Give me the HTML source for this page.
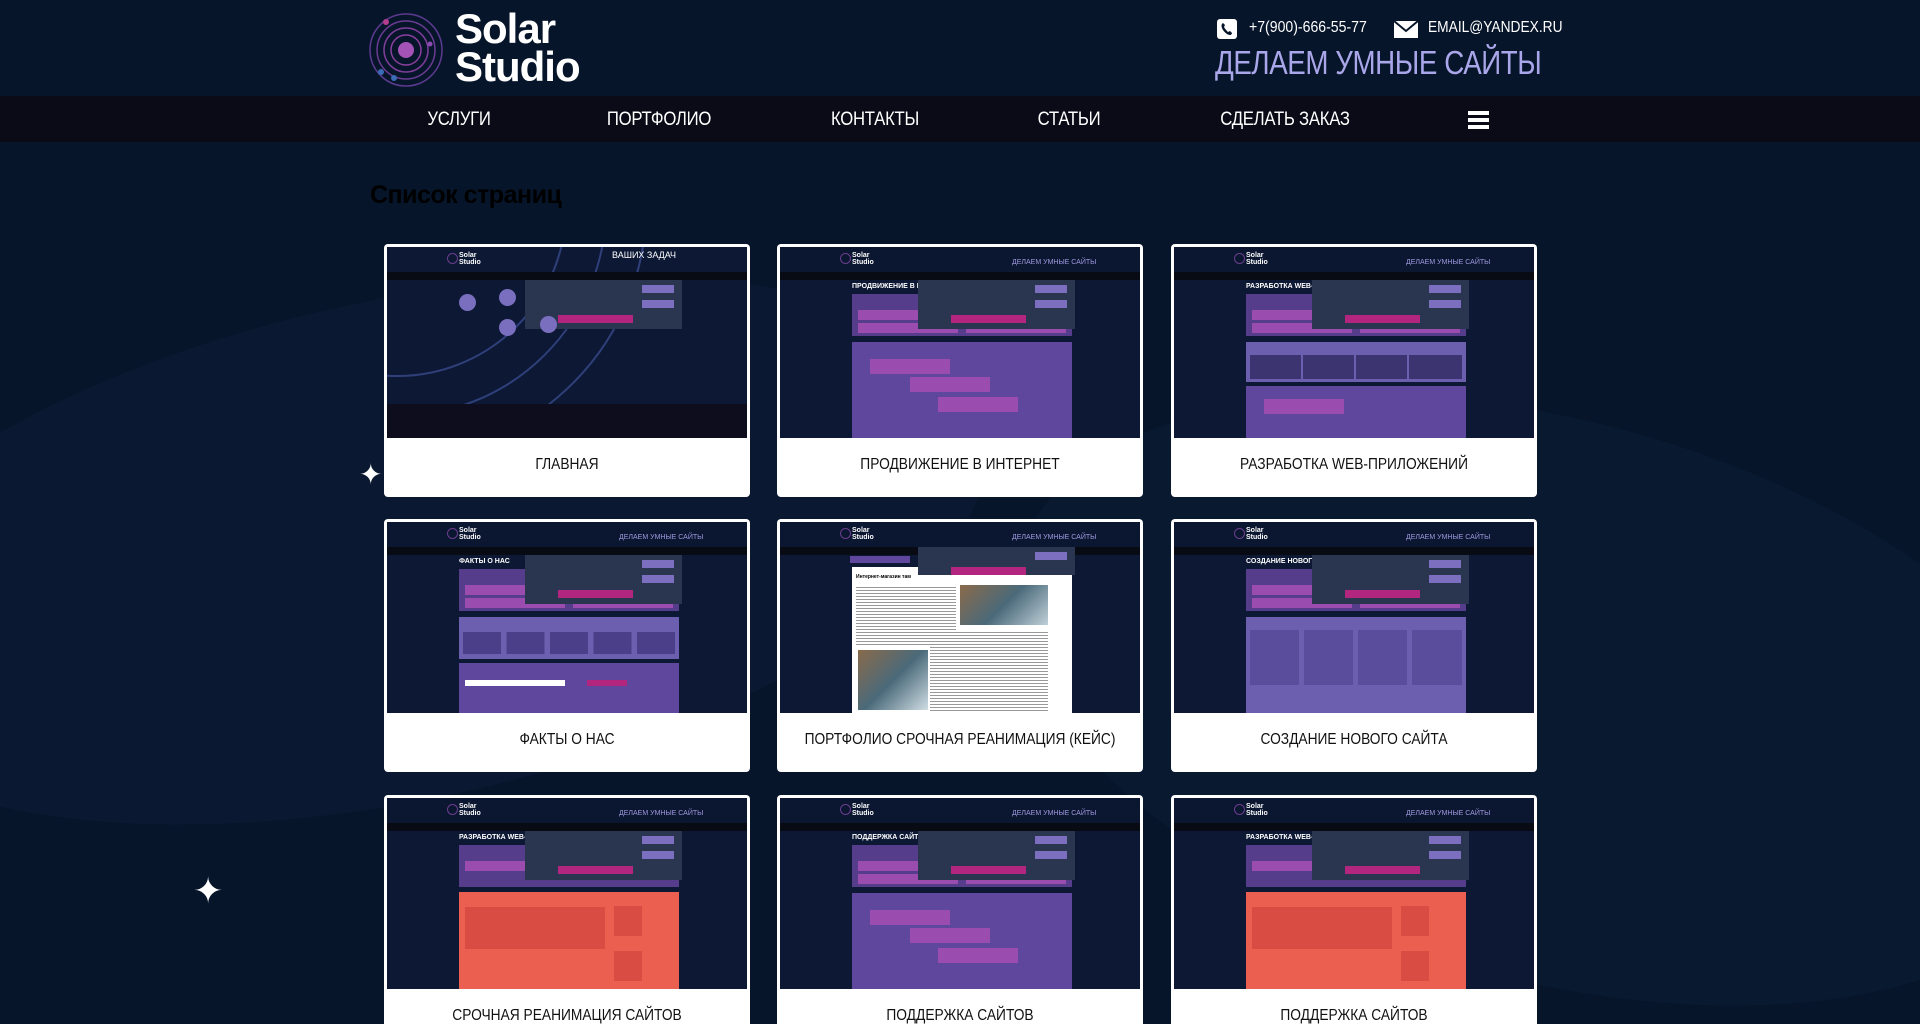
<!DOCTYPE html>
<html><head><meta charset="utf-8">
<style>
*{margin:0;padding:0;box-sizing:border-box}
html,body{width:1920px;height:1024px;overflow:hidden}
body{background:#07152a;font-family:"Liberation Sans","DejaVu Sans",sans-serif}
#w{position:relative;width:1920px;height:1024px;overflow:hidden;background:#07152a}
.bg1{position:absolute;left:-200px;top:300px;width:1200px;height:500px;border-radius:50%;background:#0b1a33;transform:rotate(-12deg);opacity:.8}
.bg2{position:absolute;left:1000px;top:420px;width:1100px;height:560px;border-radius:50%;background:#0a1a32;transform:rotate(15deg);opacity:.8}
.header{position:absolute;left:0;top:0;width:1920px;height:96px}
.nav{position:absolute;left:0;top:96px;width:1920px;height:46px;background:#0a0b17}
.nav span{position:absolute;top:13px;color:#fff;font-size:19px;transform:translateX(-50%) scaleX(.88);letter-spacing:-.3px;white-space:nowrap}
.star{position:absolute;color:#fff}
h1{position:absolute;left:370px;top:181px;font-size:25px;color:#000;font-weight:bold;letter-spacing:-.5px}
.card{position:absolute;width:366px;height:253px;background:#fff;border-radius:4px;overflow:hidden}
.thumb{position:absolute;left:3px;top:3px;width:360px;height:191px;background:#0c1834;overflow:hidden}
.label{position:absolute;left:0;top:212px;width:100%;text-align:center;font-size:16px;color:#111;transform:scaleX(.86)}
.mh{position:absolute;left:0;top:0;width:360px;height:25px;background:#0b1630}
.mn{position:absolute;left:0;top:25px;width:360px;height:8px;background:#080a14}
.ml{position:absolute;left:72px;top:5px;color:#fff;font-size:7px;line-height:7px;font-weight:bold}
.mlc{position:absolute;left:60px;top:6px;width:11px;height:11px;border-radius:50%;border:1px solid #6b3d8f}
.mt{position:absolute;left:232px;top:12px;color:#9f9ae0;font-size:7px}
.pan{position:absolute;left:138px;top:33px;width:157px;height:49px;background:#2a3550}
.pan i{position:absolute;background:#7d6fc0;width:32px;height:8px}
.pan b{position:absolute;left:33px;top:35px;width:75px;height:8px;background:#b3267f}
.pt{position:absolute;left:72px;top:36px;color:#fff;font-size:7px;font-weight:bold}
.pb{position:absolute;background:#563d8c}
.pk{position:absolute;background:#9a4caf}
.rd{position:absolute;background:#eb5f51}
</style></head><body><div id="w">
<div class="bg1"></div><div class="bg2"></div>
<div class="header">
<svg style="position:absolute;left:368px;top:12px" width="76" height="76" viewBox="0 0 76 76">
<g fill="none" stroke-width="1.5"><circle cx="38" cy="38" r="36" stroke="#5b3a8f"/><circle cx="38" cy="38" r="29" stroke="#6a3c93"/><circle cx="38" cy="38" r="22" stroke="#7d3d98"/><circle cx="38" cy="38" r="15" stroke="#8a3f9e"/></g>
<circle cx="38" cy="38" r="8" fill="#a353b5"/><circle cx="18" cy="10" r="3" fill="#b43e8e"/><circle cx="13" cy="60" r="3" fill="#3a6cb5"/><circle cx="26" cy="66" r="3" fill="#3a6cb5"/><circle cx="62" cy="32" r="2.5" fill="#8a4bb0"/></svg>
<div style="position:absolute;left:455px;top:10px;color:#fff;font-size:42px;font-weight:bold;line-height:38px;letter-spacing:-1px">Solar<br>Studio</div>
<svg style="position:absolute;left:1217px;top:19px" width="20" height="20" viewBox="0 0 20 20"><rect width="20" height="20" rx="3" fill="#fff"/><path d="M6 4c-2 1-2 4 0 7s5 5 7 5c1 0 2-1 2-2l-2-2-2 1c-1-1-3-3-4-5l1-2-2-2z" fill="#07152a"/></svg>
<div style="position:absolute;left:1249px;top:19px;color:#fff;font-size:16px;transform:scaleX(.88);transform-origin:left">+7(900)-666-55-77</div>
<svg style="position:absolute;left:1394px;top:21px" width="24" height="17" viewBox="0 0 24 17"><rect width="24" height="17" fill="#fff"/><path d="M0 0l12 10L24 0" fill="none" stroke="#07152a" stroke-width="2"/></svg>
<div style="position:absolute;left:1428px;top:19px;color:#fff;font-size:16px;transform:scaleX(.86);transform-origin:left">EMAIL@YANDEX.RU</div>
<div style="position:absolute;left:1215px;top:44px;color:#aaa6ea;font-size:33px;letter-spacing:-.5px;transform:scaleX(.84);transform-origin:left;white-space:nowrap">ДЕЛАЕМ УМНЫЕ САЙТЫ</div>
</div>
<div class="nav">
<span style="left:459px">УСЛУГИ</span><span style="left:659px">ПОРТФОЛИО</span><span style="left:875px">КОНТАКТЫ</span><span style="left:1069px">СТАТЬИ</span><span style="left:1285px">СДЕЛАТЬ ЗАКАЗ</span>
<div style="position:absolute;left:1468px;top:15px;width:21px;height:18px;background:linear-gradient(#fff 0 4px,transparent 4px 7px,#fff 7px 11px,transparent 11px 14px,#fff 14px)"></div>
</div>
<div class="star" style="left:359px;top:458px;font-size:28px">✦</div>
<div class="star" style="left:193px;top:870px;font-size:36px">✦</div>
<h1>Список страниц</h1>

<div class="card" style="left:384px;top:244px"><div class="thumb">
<div style="position:absolute;left:-200px;top:-250px;width:420px;height:420px;border-radius:50%;border:2px solid #2f3f7a"></div>
<div style="position:absolute;left:-160px;top:-210px;width:340px;height:340px;border-radius:50%;border:2px solid #2f3f7a"></div>
<div style="position:absolute;left:-240px;top:-290px;width:500px;height:500px;border-radius:50%;border:2px solid #2f3f7a"></div>
<div class="mlc"></div><div class="ml">Solar<br>Studio</div><div class="mn" style="background:#080a14"></div>
<div style="position:absolute;left:225px;top:3px;color:#fff;font-size:9px">ВАШИХ ЗАДАЧ</div>
<div class="pan"><i style="left:117px;top:5px"></i><i style="left:117px;top:20px"></i><b></b></div>
<div style="position:absolute;left:72px;top:47px;width:17px;height:17px;border-radius:50%;background:#7a6fbf"></div>
<div style="position:absolute;left:112px;top:42px;width:17px;height:17px;border-radius:50%;background:#7a6fbf"></div>
<div style="position:absolute;left:112px;top:72px;width:17px;height:17px;border-radius:50%;background:#7a6fbf"></div>
<div style="position:absolute;left:153px;top:69px;width:17px;height:17px;border-radius:50%;background:#7a6fbf"></div>
<div style="position:absolute;left:0;top:157px;width:360px;height:34px;background:#0d0d1d"></div>
</div><div class="label">ГЛАВНАЯ</div></div>

<div class="card" style="left:777px;top:244px"><div class="thumb">
<div class="mh"></div><div class="mlc"></div><div class="ml">Solar<br>Studio</div><div class="mt">ДЕЛАЕМ УМНЫЕ САЙТЫ</div><div class="mn"></div>
<div class="pt">ПРОДВИЖЕНИЕ В ИН</div>
<div class="pb" style="left:72px;top:47px;width:220px;height:42px"></div>
<div class="pk" style="left:78px;top:63px;width:100px;height:10px"></div><div class="pk" style="left:78px;top:76px;width:100px;height:10px"></div><div class="pk" style="left:186px;top:76px;width:100px;height:10px"></div>
<div class="pb" style="left:72px;top:95px;width:220px;height:100px;background:#5e479c"></div>
<div class="pk" style="left:90px;top:112px;width:80px;height:15px"></div><div class="pk" style="left:130px;top:130px;width:80px;height:15px"></div><div class="pk" style="left:158px;top:150px;width:80px;height:15px"></div>
<div class="pan"><i style="left:117px;top:5px"></i><i style="left:117px;top:20px"></i><b></b></div>
</div><div class="label">ПРОДВИЖЕНИЕ В ИНТЕРНЕТ</div></div>

<div class="card" style="left:1171px;top:244px"><div class="thumb">
<div class="mh"></div><div class="mlc"></div><div class="ml">Solar<br>Studio</div><div class="mt">ДЕЛАЕМ УМНЫЕ САЙТЫ</div><div class="mn"></div>
<div class="pt">РАЗРАБОТКА WEB-</div>
<div class="pb" style="left:72px;top:47px;width:220px;height:42px"></div>
<div class="pk" style="left:78px;top:63px;width:100px;height:10px"></div><div class="pk" style="left:78px;top:76px;width:100px;height:10px"></div><div class="pk" style="left:186px;top:76px;width:100px;height:10px"></div>
<div class="pb" style="left:72px;top:95px;width:220px;height:40px;background:#6d5fb0"></div>
<div style="position:absolute;left:76px;top:108px;width:212px;height:24px;background:linear-gradient(90deg,#3c3470 0 24%,transparent 24% 25%,#3c3470 25% 49%,transparent 49% 50%,#3c3470 50% 74%,transparent 74% 75%,#3c3470 75%)"></div>
<div class="pb" style="left:72px;top:139px;width:220px;height:60px;background:#5e479c"></div>
<div class="pk" style="left:90px;top:152px;width:80px;height:15px"></div>
<div class="pan"><i style="left:117px;top:5px"></i><i style="left:117px;top:20px"></i><b></b></div>
</div><div class="label">РАЗРАБОТКА WEB-ПРИЛОЖЕНИЙ</div></div>

<div class="card" style="left:384px;top:519px"><div class="thumb">
<div class="mh"></div><div class="mlc"></div><div class="ml">Solar<br>Studio</div><div class="mt">ДЕЛАЕМ УМНЫЕ САЙТЫ</div><div class="mn"></div>
<div class="pt">ФАКТЫ О НАС</div>
<div class="pb" style="left:72px;top:47px;width:220px;height:42px"></div>
<div class="pk" style="left:78px;top:63px;width:100px;height:10px"></div><div class="pk" style="left:78px;top:76px;width:100px;height:10px"></div><div class="pk" style="left:186px;top:76px;width:100px;height:10px"></div>
<div class="pb" style="left:72px;top:95px;width:220px;height:42px;background:#6d5fb0"></div>
<div style="position:absolute;left:76px;top:110px;width:212px;height:22px;background:linear-gradient(90deg,#4a3f88 0 18%,transparent 18% 20.5%,#4a3f88 20.5% 38.5%,transparent 38.5% 41%,#4a3f88 41% 59%,transparent 59% 61.5%,#4a3f88 61.5% 79.5%,transparent 79.5% 82%,#4a3f88 82%)"></div>
<div class="pb" style="left:72px;top:141px;width:220px;height:60px;background:#5e479c"></div>
<div style="position:absolute;left:78px;top:158px;width:100px;height:6px;background:#fff"></div><div style="position:absolute;left:200px;top:158px;width:40px;height:6px;background:#b3267f"></div>
<div class="pan"><i style="left:117px;top:5px"></i><i style="left:117px;top:20px"></i><b></b></div>
</div><div class="label">ФАКТЫ О НАС</div></div>

<div class="card" style="left:777px;top:519px"><div class="thumb">
<div class="mh"></div><div class="mlc"></div><div class="ml">Solar<br>Studio</div><div class="mt">ДЕЛАЕМ УМНЫЕ САЙТЫ</div><div class="mn"></div>
<div style="position:absolute;left:70px;top:34px;width:60px;height:7px;background:#5e479c"></div>
<div style="position:absolute;left:72px;top:45px;width:220px;height:150px;background:#fff"></div>
<div style="position:absolute;left:76px;top:52px;color:#000;font-size:5px;font-weight:bold">Интернет-магазин там</div>
<div style="position:absolute;left:76px;top:65px;width:100px;height:60px;background:repeating-linear-gradient(#999 0 1px,#fff 1px 3px)"></div>
<div style="position:absolute;left:180px;top:63px;width:88px;height:40px;background:linear-gradient(135deg,#8a6a4a,#4a6a7a 50%,#c0d0d8)"></div>
<div style="position:absolute;left:78px;top:128px;width:70px;height:60px;background:linear-gradient(135deg,#8a6a4a,#4a6a7a 50%,#d0dde4)"></div>
<div style="position:absolute;left:150px;top:110px;width:118px;height:80px;background:repeating-linear-gradient(#999 0 1px,#fff 1px 3px)"></div>
<div class="pan" style="height:28px;top:25px"><i style="left:117px;top:5px"></i><b style="top:20px"></b></div>
</div><div class="label">ПОРТФОЛИО СРОЧНАЯ РЕАНИМАЦИЯ (КЕЙС)</div></div>

<div class="card" style="left:1171px;top:519px"><div class="thumb">
<div class="mh"></div><div class="mlc"></div><div class="ml">Solar<br>Studio</div><div class="mt">ДЕЛАЕМ УМНЫЕ САЙТЫ</div><div class="mn"></div>
<div class="pt">СОЗДАНИЕ НОВОГО</div>
<div class="pb" style="left:72px;top:47px;width:220px;height:42px"></div>
<div class="pk" style="left:78px;top:63px;width:100px;height:10px"></div><div class="pk" style="left:78px;top:76px;width:100px;height:10px"></div><div class="pk" style="left:186px;top:76px;width:100px;height:10px"></div>
<div class="pb" style="left:72px;top:95px;width:220px;height:100px;background:#6d5fb0"></div>
<div style="position:absolute;left:76px;top:108px;width:212px;height:55px;background:linear-gradient(90deg,#5a4d9c 0 23%,transparent 23% 25.5%,#5a4d9c 25.5% 48.5%,transparent 48.5% 51%,#5a4d9c 51% 74%,transparent 74% 76.5%,#5a4d9c 76.5%)"></div>
<div class="pan"><i style="left:117px;top:5px"></i><i style="left:117px;top:20px"></i><b></b></div>
</div><div class="label">СОЗДАНИЕ НОВОГО САЙТА</div></div>

<div class="card" style="left:384px;top:795px"><div class="thumb">
<div class="mh"></div><div class="mlc"></div><div class="ml">Solar<br>Studio</div><div class="mt">ДЕЛАЕМ УМНЫЕ САЙТЫ</div><div class="mn"></div>
<div class="pt">РАЗРАБОТКА WEB-</div>
<div class="pb" style="left:72px;top:47px;width:220px;height:42px"></div>
<div class="pk" style="left:78px;top:63px;width:100px;height:10px"></div>
<div class="rd" style="left:72px;top:94px;width:220px;height:100px"></div>
<div style="position:absolute;left:78px;top:109px;width:140px;height:42px;background:#d84c44"></div>
<div style="position:absolute;left:227px;top:108px;width:28px;height:30px;background:#d84c44"></div><div style="position:absolute;left:227px;top:153px;width:28px;height:30px;background:#d84c44"></div>
<div class="pan"><i style="left:117px;top:5px"></i><i style="left:117px;top:20px"></i><b></b></div>
</div><div class="label">СРОЧНАЯ РЕАНИМАЦИЯ САЙТОВ</div></div>

<div class="card" style="left:777px;top:795px"><div class="thumb">
<div class="mh"></div><div class="mlc"></div><div class="ml">Solar<br>Studio</div><div class="mt">ДЕЛАЕМ УМНЫЕ САЙТЫ</div><div class="mn"></div>
<div class="pt">ПОДДЕРЖКА САЙТОВ</div>
<div class="pb" style="left:72px;top:47px;width:220px;height:42px"></div>
<div class="pk" style="left:78px;top:63px;width:100px;height:10px"></div><div class="pk" style="left:78px;top:76px;width:100px;height:10px"></div><div class="pk" style="left:186px;top:76px;width:100px;height:10px"></div>
<div class="pb" style="left:72px;top:95px;width:220px;height:100px;background:#5e479c"></div>
<div class="pk" style="left:90px;top:112px;width:80px;height:15px"></div><div class="pk" style="left:130px;top:130px;width:80px;height:15px"></div><div class="pk" style="left:158px;top:150px;width:80px;height:15px"></div>
<div class="pan"><i style="left:117px;top:5px"></i><i style="left:117px;top:20px"></i><b></b></div>
</div><div class="label">ПОДДЕРЖКА САЙТОВ</div></div>

<div class="card" style="left:1171px;top:795px"><div class="thumb">
<div class="mh"></div><div class="mlc"></div><div class="ml">Solar<br>Studio</div><div class="mt">ДЕЛАЕМ УМНЫЕ САЙТЫ</div><div class="mn"></div>
<div class="pt">РАЗРАБОТКА WEB-</div>
<div class="pb" style="left:72px;top:47px;width:220px;height:42px"></div>
<div class="pk" style="left:78px;top:63px;width:100px;height:10px"></div>
<div class="rd" style="left:72px;top:94px;width:220px;height:100px"></div>
<div style="position:absolute;left:78px;top:109px;width:140px;height:42px;background:#d84c44"></div>
<div style="position:absolute;left:227px;top:108px;width:28px;height:30px;background:#d84c44"></div><div style="position:absolute;left:227px;top:153px;width:28px;height:30px;background:#d84c44"></div>
<div class="pan"><i style="left:117px;top:5px"></i><i style="left:117px;top:20px"></i><b></b></div>
</div><div class="label">ПОДДЕРЖКА САЙТОВ</div></div>
</div></body></html>
